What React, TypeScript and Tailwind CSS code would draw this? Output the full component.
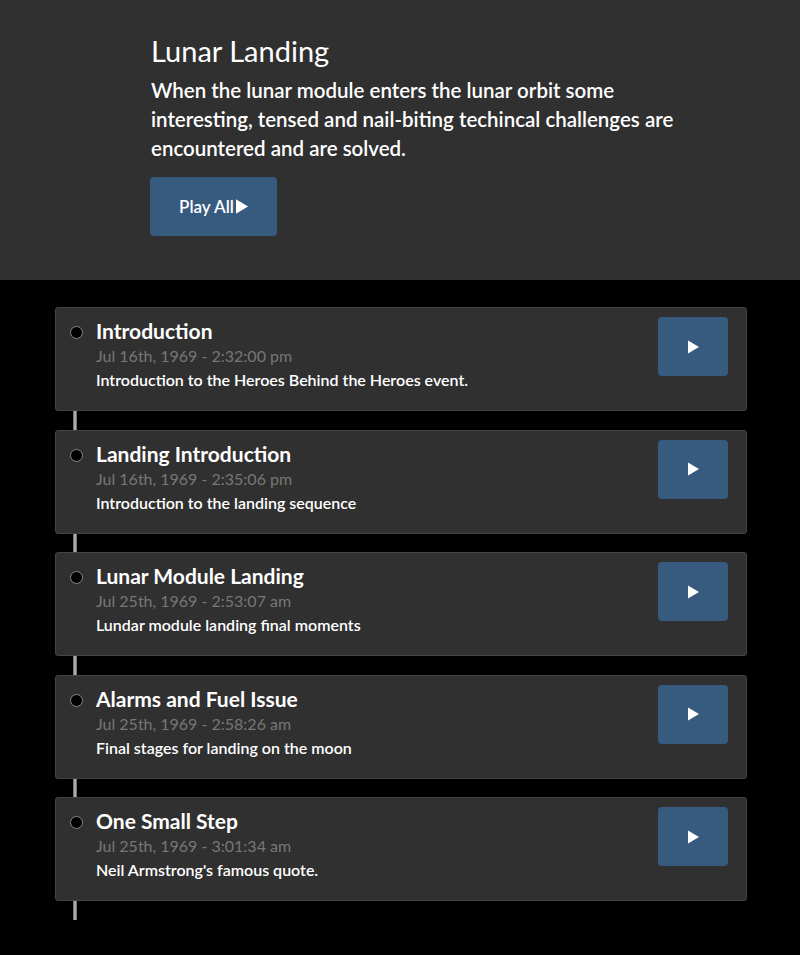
import React from 'react';

const events = [
  { title: 'Introduction', date: 'Jul 16th, 1969 - 2:32:00 pm', text: 'Introduction to the Heroes Behind the Heroes event.' },
  { title: 'Landing Introduction', date: 'Jul 16th, 1969 - 2:35:06 pm', text: 'Introduction to the landing sequence' },
  { title: 'Lunar Module Landing', date: 'Jul 25th, 1969 - 2:53:07 am', text: 'Lundar module landing final moments' },
  { title: 'Alarms and Fuel Issue', date: 'Jul 25th, 1969 - 2:58:26 am', text: 'Final stages for landing on the moon' },
  { title: 'One Small Step', date: 'Jul 25th, 1969 - 3:01:34 am', text: "Neil Armstrong's famous quote." },
];

const Triangle: React.FC<{ className?: string }> = ({ className }) => (
  <svg viewBox="0 0 10 12" className={className} fill="currentColor">
    <path d="M0 0 L10 6 L0 12 Z" />
  </svg>
);

export default function App() {
  return (
    <div className="min-h-[955px] bg-black font-['Lato','Open_Sans',sans-serif] text-white">
      {/* Header */}
      <div className="h-[280px] bg-[#303030] pl-[151px] pr-[100px] pt-[33px]">
        <h1 className="text-[29px] leading-[35px] font-normal">Lunar Landing</h1>
        <p className="mt-[8px] text-[20.5px] leading-[29px] font-semibold">
          When the lunar module enters the lunar orbit some interesting, tensed and nail-biting techincal challenges are encountered and are solved.
        </p>
        <button className="mt-[14px] -ml-px flex h-[59px] w-[127px] items-center justify-center rounded-[4px] bg-[#375a7f] text-[17px] font-semibold text-white">
          Play All<Triangle className="ml-[2px] h-[15px] w-[12px]" />
        </button>
      </div>

      {/* Timeline */}
      <div className="pl-[55px] pr-[53px] pt-[27px]">
        {events.map((e) => (
          <div key={e.title}>
            <div className="flex h-[104px] rounded-[3px] border border-[#444] bg-[#303030] pl-[14px] pr-[18px] pt-[10px]">
              <div className="mt-[8px] h-[13px] w-[13px] shrink-0 rounded-full border border-[#888] bg-black" />
              <div className="ml-[13px] flex-1">
                <div className="text-[21px] leading-[26px] font-bold">{e.title}</div>
                <div className="text-[16px] leading-[24px] text-[#777]">{e.date}</div>
                <div className="text-[16px] leading-[23px] font-semibold">{e.text}</div>
              </div>
              <button className="-mt-px flex h-[59px] w-[70px] items-center justify-center rounded-[4px] bg-[#375a7f]">
                <Triangle className="h-[14px] w-[11px] text-white" />
              </button>
            </div>
            <div className="h-[18.5px] pl-[18px]">
              <div className="h-full w-[4px] bg-[#aaa] border-x border-[#777]" />
            </div>
          </div>
        ))}
      </div>
    </div>
  );
}
